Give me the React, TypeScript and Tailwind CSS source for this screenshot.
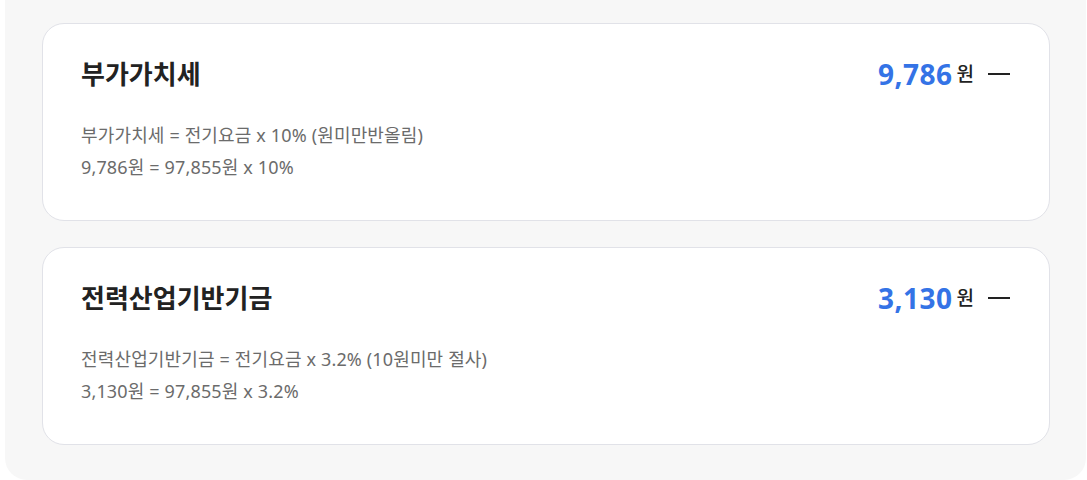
const rows = [
  {
    title: '부가가치세',
    amount: '9,786',
    formula: '부가가치세 = 전기요금 x 10% (원미만반올림)',
    detail: '9,786원 = 97,855원 x 10%',
  },
  {
    title: '전력산업기반기금',
    amount: '3,130',
    formula: '전력산업기반기금 = 전기요금 x 3.2% (10원미만 절사)',
    detail: '3,130원 = 97,855원 x 3.2%',
  },
];

function FeeCard({ title, amount, formula, detail }: (typeof rows)[number]) {
  return (
    <section className="bg-white border border-[#e1e2e8] rounded-[22px] pl-[38px] pr-[39px] pt-[34px] pb-[37px]">
      <div className="flex items-center justify-between h-8">
        <h2 className="text-[26px] font-bold text-[#222]">{title}</h2>
        <div className="flex items-center">
          <span className="text-[28px] font-bold text-[#3473e6] tracking-[0.5px]">{amount}</span>
          <span className="ml-1 text-[19px] font-medium text-[#222]">원</span>
          <svg width="22" height="4" viewBox="0 0 22 4" className="ml-[14px]">
            <rect x="0" y="1" width="22" height="2" fill="#222" />
          </svg>
        </div>
      </div>
      <div className="mt-[29px] text-[18px] leading-8 tracking-[0.15px] text-[#6b6b6b]">
        <p>{formula}</p>
        <p>{detail}</p>
      </div>
    </section>
  );
}

export default function App() {
  return (
    <div className="w-[1087px] h-[480px] bg-white" style={{ fontFamily: '"Noto Sans", "Noto Sans CJK KR", sans-serif' }}>
      <div className="ml-[5px] w-[1081px] h-[480px] bg-[#f7f7f7] rounded-b-[22px] pl-[37px] pr-[36px] pt-[23px] flex flex-col gap-[26px]">
        {rows.map((r) => (
          <FeeCard key={r.title} {...r} />
        ))}
      </div>
    </div>
  );
}
